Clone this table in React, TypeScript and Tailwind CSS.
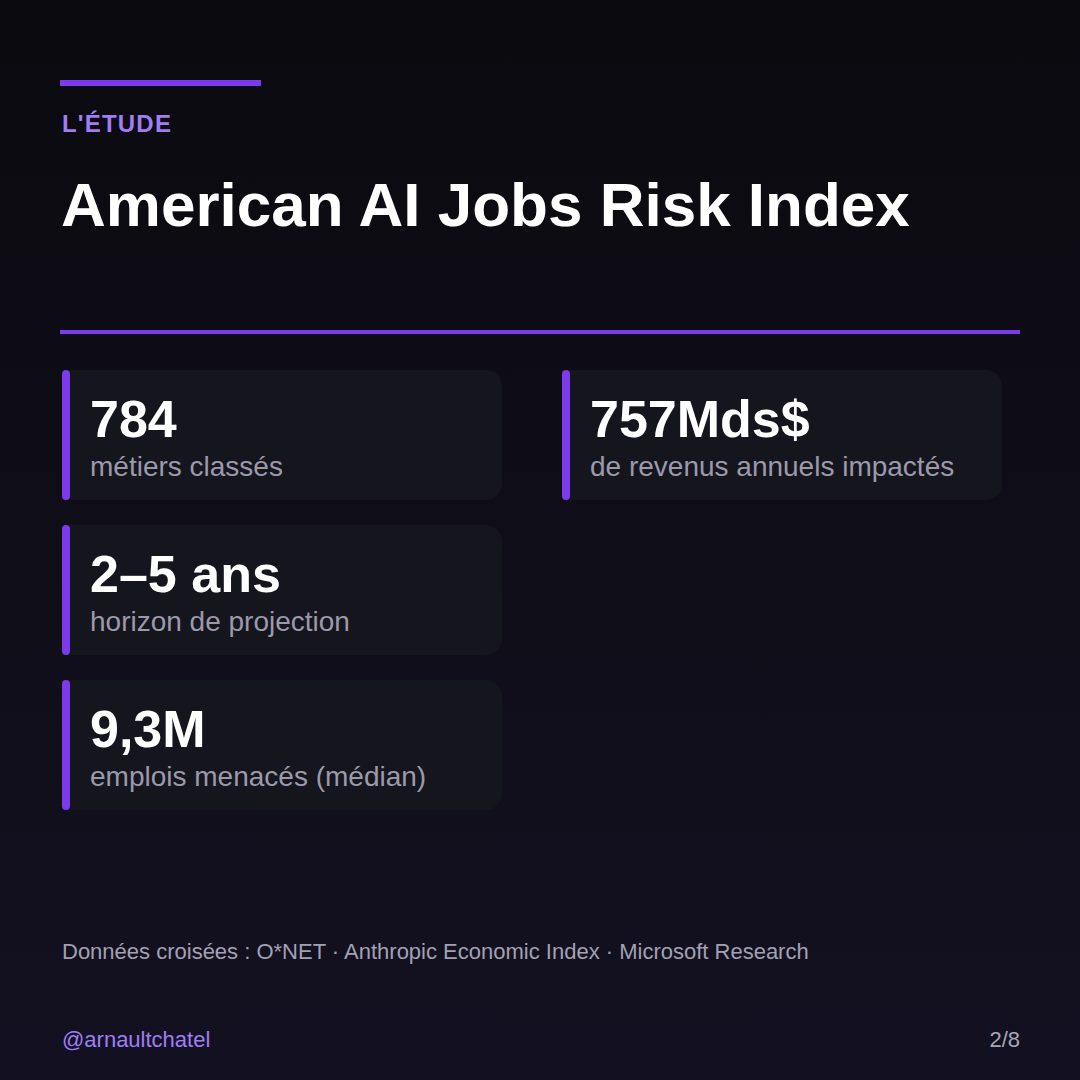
const stats = [
  { value: "784", label: "métiers classés" },
  { value: "757Mds$", label: "de revenus annuels impactés" },
  { value: "2–5 ans", label: "horizon de projection" },
  { value: "9,3M", label: "emplois menacés (médian)" },
];

function StatCard({ value, label }: { value: string; label: string }) {
  return (
    <div className="flex h-[130px]">
      <div className="w-2 rounded-full bg-[#7c3aed]"></div>
      <div className="flex-1 rounded-r-2xl bg-[#15151e] pl-5 pt-[23px]">
        <div className="text-[52px] font-bold leading-none text-white">{value}</div>
        <div className="mt-1.5 text-[28px] leading-[32px] text-[#9c99ab]">{label}</div>
      </div>
    </div>
  );
}

export default function App() {
  return (
    <div
      className="flex h-[1080px] w-[1080px] flex-col bg-gradient-to-b from-[#0b0a0f] to-[#131121] px-[60px] pt-20"
      style={{ fontFamily: '"Liberation Sans", Arial, sans-serif' }}
    >
      <div className="h-1.5 w-[201px] bg-[#7c3aed]"></div>
      <div className="mt-[26px] pl-[2px] text-2xl font-bold leading-none tracking-[1.2px] text-[#a07df5]">
        L'ÉTUDE
      </div>
      <h1 className="mt-[38px] pl-[1px] text-[62px] font-bold leading-none text-white">
        American AI Jobs Risk Index
      </h1>
      <div className="mt-[94px] h-1 w-full bg-[#7c3aed]"></div>

      <div className="mt-9 grid grid-cols-[440px_440px] gap-x-[60px] gap-y-[25px] pl-[2px]">
        <StatCard {...stats[0]} />
        <StatCard {...stats[1]} />
        <StatCard {...stats[2]} />
        <div></div>
        <StatCard {...stats[3]} />
      </div>

      <div className="mt-[131px] pl-[2px] text-[22px] leading-none text-[#a3a0b3]">
        Données croisées : O*NET · Anthropic Economic Index · Microsoft Research
      </div>
      <div className="mt-[66px] flex items-center justify-between pl-[2px] text-[22px] leading-none">
        <span className="text-[#a07df5]">@arnaultchatel</span>
        <span className="text-[#a8a6b6]">2/8</span>
      </div>
    </div>
  );
}
